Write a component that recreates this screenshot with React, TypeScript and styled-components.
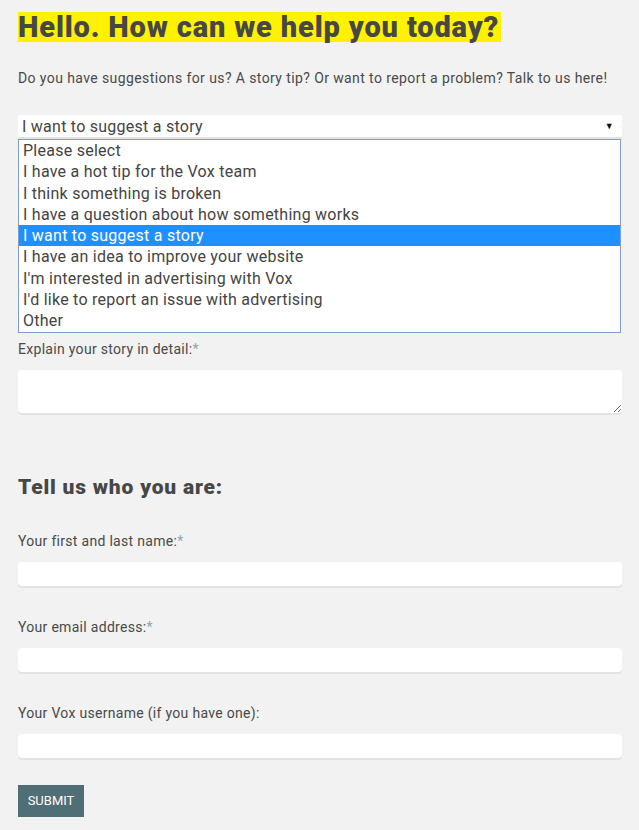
import React from 'react';
import styled, { createGlobalStyle } from 'styled-components';

const GlobalStyle = createGlobalStyle`
  html, body {
    margin: 0;
    padding: 0;
    background: #f1f2f1;
  }
  body {
    font-family: Roboto, "Liberation Sans", sans-serif;
    color: #4a4a4a;
  }
`;

const Page = styled.form`
  width: 604px;
  padding: 12px 17px 14px 18px;
  display: flex;
  flex-direction: column;
`;

const Title = styled.h1`
  align-self: flex-start;
  margin: 0;
  padding: 0 2px 0 0;
  background: #fff200;
  color: #474747;
  font-size: 29px;
  line-height: 30px;
  font-weight: 900;
  letter-spacing: 0.85px;
`;

const Intro = styled.p`
  margin: 27px 0 0;
  font-size: 14px;
  line-height: 18px;
  letter-spacing: 0.4px;
`;

const SelectBox = styled.div`
  margin-top: 28px;
  height: 22px;
  background: #fff;
  box-shadow: 0 2px 0 #e2e3e3;
  display: flex;
  align-items: center;
  justify-content: space-between;
  padding: 0 8px 0 4px;
  font-size: 16px;
  letter-spacing: 0.25px;
  color: #444;
`;

const Caret = styled.span`
  font-size: 9px;
  color: #111;
`;

const ListBox = styled.ul`
  list-style: none;
  margin: 2px 1px 0 0;
  padding: 0;
  background: #fff;
  border: 1px solid #7f9dc9;
`;

const Option = styled.li<{ $selected?: boolean }>`
  height: 21.3px;
  line-height: 21px;
  padding: 0 4px;
  font-size: 16px;
  letter-spacing: 0.25px;
  color: ${(p) => (p.$selected ? '#fff' : '#444')};
  background: ${(p) => (p.$selected ? '#1e90ff' : 'transparent')};
`;

const Label = styled.label<{ $top: number }>`
  display: block;
  margin-top: ${(p) => p.$top}px;
  font-size: 14px;
  line-height: 18px;
  letter-spacing: 0.3px;
  color: #4a4a4a;
`;

const Star = styled.span`
  color: #8aa6b8;
`;

const TextArea = styled.textarea`
  margin-top: 12px;
  height: 43px;
  box-sizing: border-box;
  border: none;
  border-radius: 4px;
  background: #fff;
  box-shadow: 0 2px 0 #e2e3e3;
  resize: vertical;
  outline: none;
  font-family: inherit;
`;

const Section = styled.h2`
  margin: 61px 0 0;
  font-size: 21px;
  line-height: 26px;
  font-weight: 900;
  letter-spacing: 0.8px;
  color: #474747;
`;

const Input = styled.input`
  margin-top: 12px;
  height: 24px;
  box-sizing: border-box;
  border: none;
  border-radius: 4px;
  background: #fff;
  box-shadow: 0 2px 0 #e2e3e3;
  outline: none;
  font-family: inherit;
`;

const Submit = styled.button`
  align-self: flex-start;
  margin-top: 27px;
  width: 66px;
  height: 32px;
  border: none;
  background: #4f6e75;
  color: #fff;
  font-family: inherit;
  font-size: 13px;
  letter-spacing: 0;
  padding: 0;
`;

const options = [
  'Please select',
  'I have a hot tip for the Vox team',
  'I think something is broken',
  'I have a question about how something works',
  'I want to suggest a story',
  'I have an idea to improve your website',
  "I'm interested in advertising with Vox",
  "I'd like to report an issue with advertising",
  'Other',
];

export default function App() {
  const selected = 'I want to suggest a story';
  return (
    <>
      <GlobalStyle />
      <Page onSubmit={(e) => e.preventDefault()}>
        <Title>Hello. How can we help you today?</Title>
        <Intro>
          Do you have suggestions for us? A story tip? Or want to report a problem? Talk to us here!
        </Intro>
        <SelectBox>
          <span>{selected}</span>
          <Caret>▼</Caret>
        </SelectBox>
        <ListBox>
          {options.map((o) => (
            <Option key={o} $selected={o === selected}>
              {o}
            </Option>
          ))}
        </ListBox>
        <Label $top={7}>
          Explain your story in detail:<Star>*</Star>
        </Label>
        <TextArea />
        <Section>Tell us who you are:</Section>
        <Label $top={32}>
          Your first and last name:<Star>*</Star>
        </Label>
        <Input type="text" />
        <Label $top={32}>
          Your email address:<Star>*</Star>
        </Label>
        <Input type="email" />
        <Label $top={32}>Your Vox username (if you have one):</Label>
        <Input type="text" />
        <Submit type="submit">SUBMIT</Submit>
      </Page>
    </>
  );
}
